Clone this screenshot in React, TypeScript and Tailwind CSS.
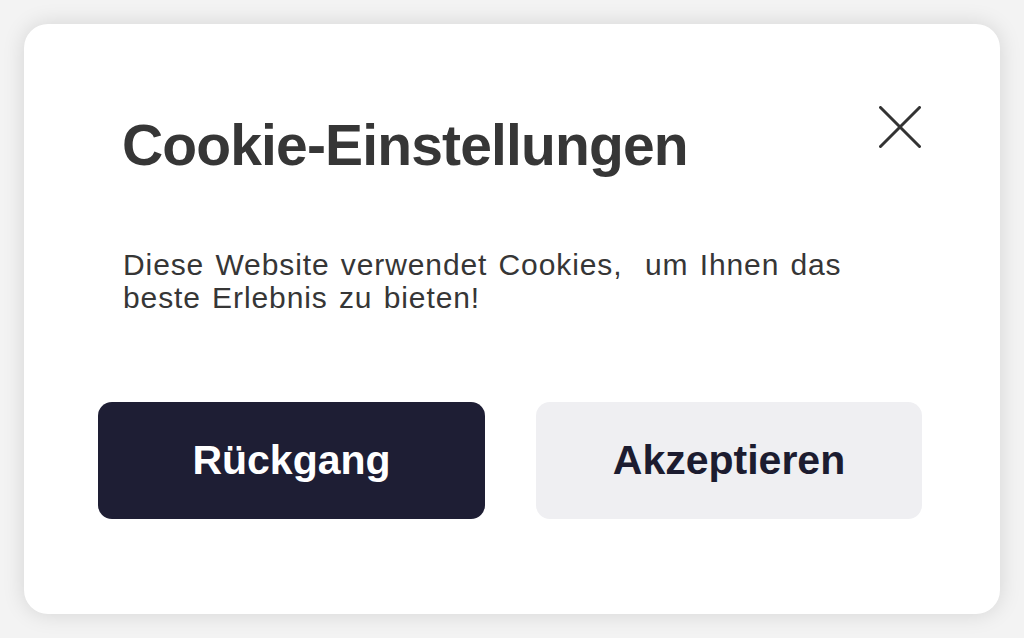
import React from "react";

export default function App() {
  return (
    <div
      className="w-[1024px] h-[638px] bg-[#f3f3f3] p-6 overflow-hidden"
      style={{ fontFamily: '"Liberation Sans", Arial, Helvetica, sans-serif' }}
    >
      <div className="w-[976px] h-[590px] bg-white rounded-[24px] shadow-[0_0_22px_rgba(0,0,0,0.13)] pl-[74px] pr-[78px] pt-[82px] flex flex-col">
        <div className="flex justify-between items-start">
          <h1 className="mt-[11px] pl-[24px] text-[57px] leading-none font-bold tracking-[-0.85px] text-[#363636]">
            Cookie-Einstellungen
          </h1>
          <button aria-label="Schließen" className="w-[42px] h-[42px] mr-[1px]">
            <svg width="42" height="42" viewBox="0 0 42 42" fill="none" stroke="#333333" strokeWidth="3" strokeLinecap="round">
              <path d="M1.5 1.5 L40.5 40.5" />
              <path d="M40.5 1.5 L1.5 40.5" />
            </svg>
          </button>
        </div>
        <p className="mt-[74px] pl-[25px] text-[30px] leading-[33px] tracking-[0.9px] [word-spacing:2px] text-[#363636]">
          Diese Website verwendet Cookies,&nbsp; um Ihnen das
          <br />
          beste Erlebnis zu bieten!
        </p>
        <div className="mt-[88px] flex justify-between">
          <button className="w-[387px] h-[117px] rounded-[14px] bg-[#1e1e34] text-white text-[41px] font-bold flex items-center justify-center">
            Rückgang
          </button>
          <button className="w-[386px] h-[117px] rounded-[14px] bg-[#efeff2] text-[#1c1c30] text-[41px] font-bold flex items-center justify-center">
            Akzeptieren
          </button>
        </div>
      </div>
    </div>
  );
}
